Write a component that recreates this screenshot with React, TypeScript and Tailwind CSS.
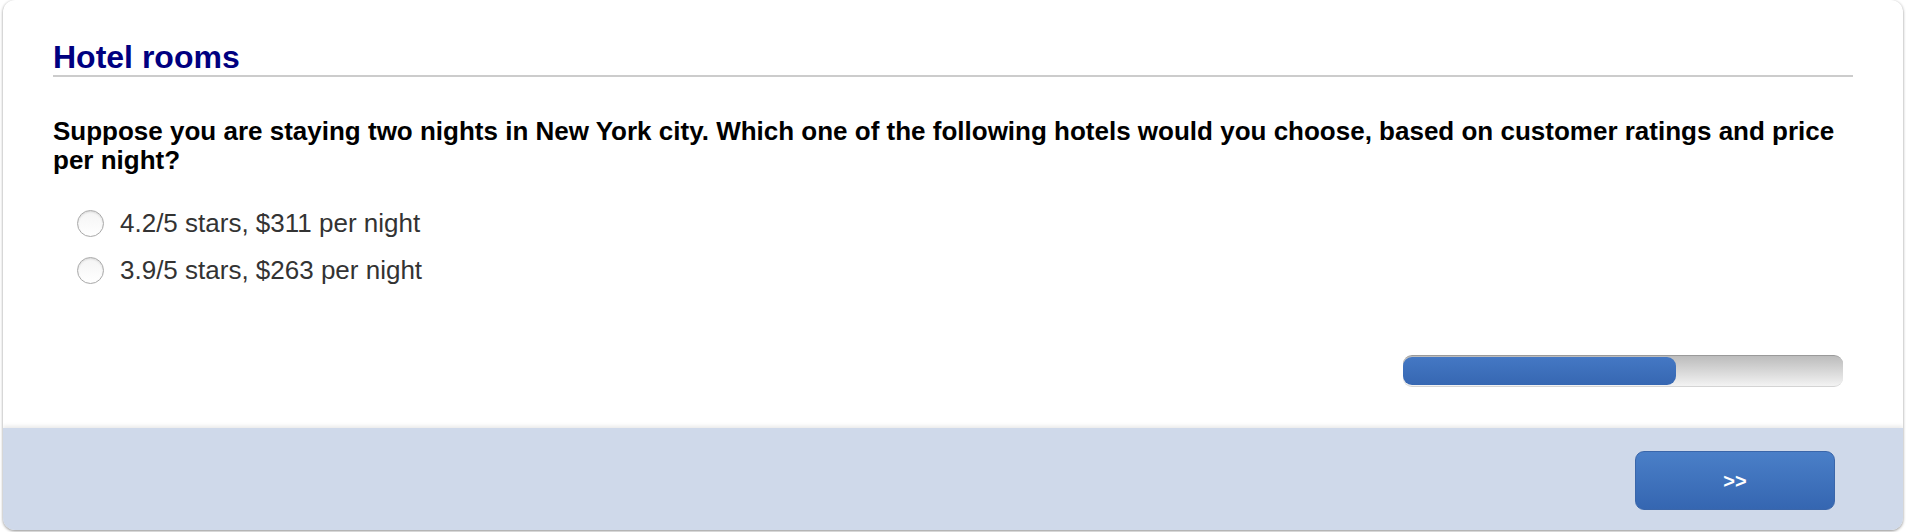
const options = ["4.2/5 stars, $311 per night", "3.9/5 stars, $263 per night"];

const Radio = () => (
  <span className="w-[27px] h-[27px] shrink-0 rounded-full border border-[#a9a9a9] bg-gradient-to-b from-[#f4f4f4] to-white shadow-[inset_0_1px_2px_rgba(0,0,0,0.12)]" />
);

const ProgressBar = ({ percent }: { percent: number }) => (
  <div className="w-[440px] h-[32px] rounded-[9px] border-t border-t-[#9a9a9a] border-b border-b-[#d4d4d4] bg-gradient-to-b from-[#bcbcbc] to-[#f3f3f3] pt-[1px] pb-[1px]">
    <div
      className="h-full rounded-[9px] bg-gradient-to-b from-[#4478c4] to-[#3667b2]"
      style={{ width: `${percent}%` }}
    />
  </div>
);

export default function App() {
  return (
    <div className="w-[1906px] h-[532px] bg-white pl-[3px] pr-[3px] font-['Liberation_Sans',Arial,sans-serif]">
      <div className="h-[530px] flex flex-col rounded-[12px] bg-white shadow-[0_1px_3px_rgba(0,0,0,0.45)] overflow-hidden">
        <div className="flex-1 px-[50px] pt-[39px]">
          <h1 className="text-[32px] leading-[36px] font-bold text-[#000080] border-b-2 border-[#cccccc]">
            Hotel rooms
          </h1>
          <p className="mt-[40px] text-[26px] leading-[29px] font-bold text-black">
            Suppose you are staying two nights in New York city. Which one of the following hotels would you choose, based on customer ratings and price per night?
          </p>
          <div className="mt-[25px] pl-[24px] flex flex-col">
            {options.map((o) => (
              <label key={o} className="h-[47px] flex items-center gap-[16px]">
                <Radio />
                <span className="text-[26px] text-[#333333]">{o}</span>
              </label>
            ))}
          </div>
          <div className="mt-[61px] flex justify-end pr-[10px]">
            <ProgressBar percent={62} />
          </div>
        </div>
        <div className="h-[102px] bg-[#cfd9ea] shadow-[0_-2px_4px_rgba(0,0,0,0.09)] flex justify-end items-start pt-[23px] pr-[68px]">
          <button className="w-[200px] h-[59px] rounded-[9px] border border-[#3a66aa] bg-gradient-to-b from-[#4a7fc8] to-[#3566b1] text-white font-bold text-[20px]">
            &gt;&gt;
          </button>
        </div>
      </div>
    </div>
  );
}
